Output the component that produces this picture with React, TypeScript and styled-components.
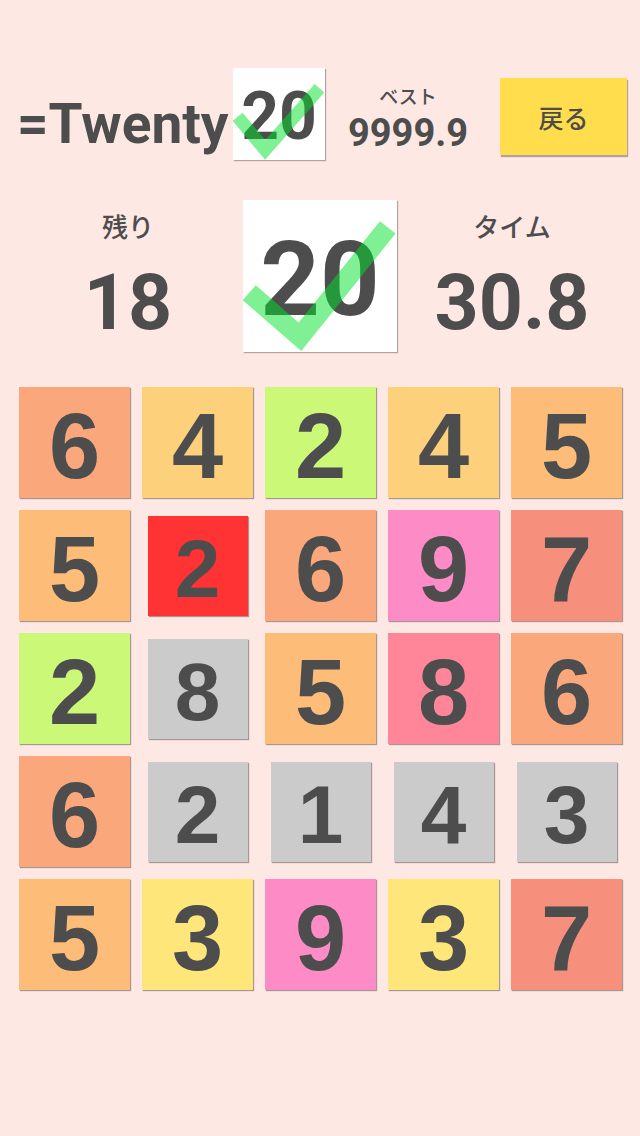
import * as React from 'react'
import styled, { createGlobalStyle } from 'styled-components'

// colours per number, grey/red for tiles in a special state
const numberColors: { [n: number]: string } = {
  1: '#fcc9a0',
  2: '#ccf877',
  3: '#ffe67a',
  4: '#fdd07b',
  5: '#fdbc78',
  6: '#f9a77b',
  7: '#f78f7d',
  8: '#ff8699',
  9: '#fd8bc6',
}

type TileState = 'normal' | 'used' | 'picked'

type TileData = {
  value: number
  state: TileState
}

const board: TileData[][] = [
  [{ value: 6, state: 'normal' }, { value: 4, state: 'normal' }, { value: 2, state: 'normal' }, { value: 4, state: 'normal' }, { value: 5, state: 'normal' }],
  [{ value: 5, state: 'normal' }, { value: 2, state: 'picked' }, { value: 6, state: 'normal' }, { value: 9, state: 'normal' }, { value: 7, state: 'normal' }],
  [{ value: 2, state: 'normal' }, { value: 8, state: 'used' }, { value: 5, state: 'normal' }, { value: 8, state: 'normal' }, { value: 6, state: 'normal' }],
  [{ value: 6, state: 'normal' }, { value: 2, state: 'used' }, { value: 1, state: 'used' }, { value: 4, state: 'used' }, { value: 3, state: 'used' }],
  [{ value: 5, state: 'normal' }, { value: 3, state: 'normal' }, { value: 9, state: 'normal' }, { value: 3, state: 'normal' }, { value: 7, state: 'normal' }],
]

const GlobalStyle = createGlobalStyle`
  html, body {
    margin: 0;
    padding: 0;
    background: #fee8e4;
  }
  body {
    font-family: Roboto, "Noto Sans CJK JP", sans-serif;
    color: #4d4d4d;
  }
`

const Screen = styled.div`
  width: 640px;
  height: 1136px;
  background: #fee8e4;
  overflow: hidden;
`

const Header = styled.div`
  display: flex;
  align-items: flex-start;
  height: 92px;
  margin-top: 68px;
  padding-left: 17px;
`

const Title = styled.div`
  width: 207px;
  font-family: Roboto, sans-serif;
  font-weight: 700;
  font-size: 55px;
  line-height: 1;
  margin-top: 29px;
  white-space: nowrap;
`

const LogoBox = styled.div<{ size: number; height: number }>`
  position: relative;
  width: ${(props) => props.size}px;
  height: ${(props) => props.height}px;
  background: #fff;
  box-shadow: 1px 1px 1px rgba(0, 0, 0, 0.3);
  display: flex;
  align-items: center;
  justify-content: center;
  flex-shrink: 0;
`

const LogoNumber = styled.span<{ fontSize: number }>`
  font-family: Roboto, sans-serif;
  font-weight: 700;
  font-size: ${(props) => props.fontSize}px;
  line-height: 1;
  padding-top: ${(props) => Math.round(props.fontSize * 0.08)}px;
  color: #4d4d4d;
`

const CheckSvg = styled.svg`
  position: absolute;
  left: 0;
  top: 0;
  width: 100%;
  height: 100%;
`

const SmallLogo = styled(LogoBox)`
  margin-left: 9px;
`

const Best = styled.div`
  display: flex;
  flex-direction: column;
  align-items: center;
  width: 166px;
  margin-top: 17px;
`

const BestLabel = styled.div`
  font-family: "Noto Sans CJK JP", sans-serif;
  font-size: 19px;
  font-weight: 500;
  line-height: 22px;
`

const BestValue = styled.div`
  font-family: Roboto, sans-serif;
  font-weight: 700;
  font-size: 38px;
  line-height: 44px;
  margin-top: 4px;
`

const BackButton = styled.button`
  width: 127px;
  height: 77px;
  border: none;
  background: #ffdd4d;
  box-shadow: 1px 2px 1px rgba(0, 0, 0, 0.3);
  font-family: "Noto Sans CJK JP", sans-serif;
  font-size: 25px;
  font-weight: 500;
  color: #4d4d4d;
  padding: 0;
  margin-left: 9px;
  margin-top: 10px;
`

const StatusRow = styled.div`
  display: grid;
  grid-template-columns: 1fr 154px 1fr;
  align-items: start;
  margin-top: 40px;
  padding: 0 13px;
`

const Stat = styled.div`
  display: flex;
  flex-direction: column;
  align-items: center;
  padding-top: 11px;
`

const StatLabel = styled.div`
  font-family: "Noto Sans CJK JP", sans-serif;
  font-size: 26px;
  font-weight: 500;
  line-height: 30px;
`

const StatValue = styled.div`
  font-family: Roboto, sans-serif;
  font-weight: 700;
  font-size: 77px;
  line-height: 90px;
  margin-top: 17px;
`

const Board = styled.div`
  display: grid;
  grid-template-columns: repeat(5, 111px);
  grid-auto-rows: 111px;
  gap: 12px;
  margin-top: 35px;
  padding-left: 19px;
`

const Cell = styled.div`
  display: flex;
  align-items: center;
  justify-content: center;
`

const Tile = styled.div<{ bg: string; small: boolean }>`
  width: ${(props) => (props.small ? 100 : 111)}px;
  height: ${(props) => (props.small ? 100 : 111)}px;
  background: ${(props) => props.bg};
  box-shadow: 1px 1px 1px rgba(0, 0, 0, 0.35);
  display: flex;
  align-items: center;
  justify-content: center;
  font-family: "Liberation Sans", Arial, sans-serif;
  font-weight: 700;
  font-size: ${(props) => (props.small ? 82 : 92)}px;
  line-height: 1;
  color: #4d4d4d;
  padding-top: ${(props) => (props.small ? 6 : 7)}px;
  box-sizing: border-box;
`

const Check = ({ points, width }: { points: string; width: number }) => (
  <CheckSvg viewBox="0 0 100 100" preserveAspectRatio="none">
    <polyline
      points={points}
      fill="none"
      stroke="rgb(0, 225, 40)"
      strokeOpacity={0.5}
      strokeWidth={width}
      strokeLinejoin="miter"
    />
  </CheckSvg>
)

const tileColor = (t: TileData) => {
  if (t.state === 'used') return '#cbcbcb'
  if (t.state === 'picked') return '#ff3333'
  return numberColors[t.value]
}

export default function App() {
  return (
    <Screen>
      <GlobalStyle />
      <Header>
        <Title>=Twenty</Title>
        <SmallLogo size={92} height={92}>
          <LogoNumber fontSize={66}>20</LogoNumber>
          <Check points="5,53 35,89 94,22" width={14} />
        </SmallLogo>
        <Best>
          <BestLabel>ベスト</BestLabel>
          <BestValue>9999.9</BestValue>
        </Best>
        <BackButton>戻る</BackButton>
      </Header>

      <StatusRow>
        <Stat>
          <StatLabel>残り</StatLabel>
          <StatValue>18</StatValue>
        </Stat>
        <LogoBox size={154} height={152}>
          <LogoNumber fontSize={104}>20</LogoNumber>
          <Check points="4,61 37,90 94,18" width={13} />
        </LogoBox>
        <Stat>
          <StatLabel>タイム</StatLabel>
          <StatValue>30.8</StatValue>
        </Stat>
      </StatusRow>

      <Board>
        {board.map((row, r) =>
          row.map((t, c) => (
            <Cell key={`${r}-${c}`}>
              <Tile bg={tileColor(t)} small={t.state !== 'normal'}>
                {t.value}
              </Tile>
            </Cell>
          ))
        )}
      </Board>
    </Screen>
  )
}
